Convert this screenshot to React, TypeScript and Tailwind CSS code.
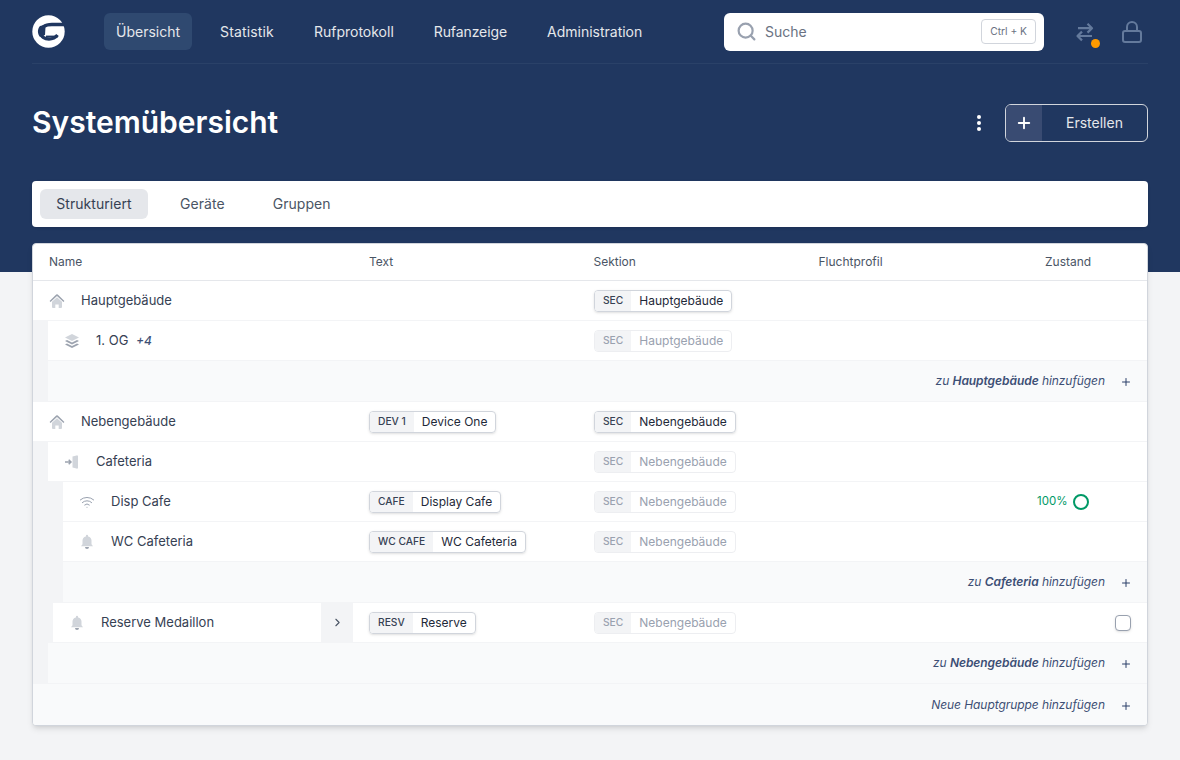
import React from "react";
import { Search, Lock, Plus, ChevronRight, Wifi } from "lucide-react";

const Home = () => (
  <svg width="16" height="16" viewBox="0 0 16 16" className="shrink-0">
    <path d="M7.200 1.600a1.100 1.100 0 0 1 1.600 0l6.600 6.400-.9.900L8 3.100 1.500 8.900.6 8z" fill="#9ca3af" />
    <path d="M8 4.200l5 4.500V14a1 1 0 0 1-1 1h-2.300v-3.500H6.300V15H4a1 1 0 0 1-1-1V8.700z" fill="#d1d5db" />
  </svg>
);
const Layers = () => (
  <svg width="16" height="16" viewBox="0 0 16 16" className="shrink-0">
    <path d="M8 1l7 3.500L8 8 1 4.500z" fill="#d1d5db" />
    <path d="M3 6.900L1 8l7 3.500L15 8l-2-1.100L8 9.400z" fill="#9ca3af" />
    <path d="M3 10.400l-2 1.100L8 15l7-3.500-2-1.100-5 2.500z" fill="#9ca3af" />
  </svg>
);
const Door = () => (
  <svg width="16" height="16" viewBox="0 0 16 16" className="shrink-0">
    <path d="M8.500 2.500l4-1a1 1 0 0 1 1.500 1v11a1 1 0 0 1-1.500 1l-4-1z" fill="#d1d5db" />
    <path d="M1 8h6M4.700 5.700L7 8l-2.300 2.300" fill="none" stroke="#9ca3af" strokeWidth="1.500" />
  </svg>
);
const Bell = () => (
  <svg width="16" height="16" viewBox="0 0 16 16" className="shrink-0">
    <path d="M8 .8a1.100 1.100 0 0 1 1.100 1.100v.5A4.300 4.300 0 0 1 12.500 6.600v3.600L14 12.300H2l1.500-2.100V6.600A4.300 4.300 0 0 1 6.900 2.400v-.5A1.100 1.100 0 0 1 8 .8z" fill="#d1d5db" />
    <path d="M6 13h4a2 2 0 0 1-4 0z" fill="#9ca3af" />
  </svg>
);
const Logo = () => (
  <svg width="33" height="33" viewBox="0 0 33 33" className="shrink-0">
    <circle cx="16.500" cy="16.500" r="16.200" fill="#fff" />
    <path d="M34 9.500H20C12 9.500 8.800 13 8.800 17c0 5 4 7 8.200 7 4 0 6.500-1.500 8.500-4" fill="none" stroke="#203760" strokeWidth="3.400" />
    <path d="M8 11c-3 3.500-2.500 8 0 11l5-2 .5-8 3-3z" fill="#203760" />
    <path d="M14 21.500h12" stroke="#203760" strokeWidth="1.800" />
  </svg>
);
const Transfer = () => (
  <svg width="20" height="20" viewBox="0 0 20 20" fill="none" stroke="#647a9c" strokeWidth="2.200" strokeLinejoin="round">
    <path d="M3 6.200h14M12.500 1.800L17 6.200l-4.500 4.400" />
    <path d="M17 14H2.500M7 9.600L2.500 14 7 18.400" />
  </svg>
);

const Tag = ({ code, label, dim }: { code: string; label: string; dim?: boolean }) => (
  <span className={`inline-flex h-[22px] items-stretch overflow-hidden rounded border ${dim ? "border-gray-200/70 text-gray-400" : "border-gray-300 text-gray-800 shadow-sm"}`}>
    <span className={`flex items-center bg-gray-100 px-2 text-[10.25px] font-medium ${dim ? "text-gray-400" : "text-gray-700"}`}>{code}</span>
    <span className="flex items-center px-2 text-[12px]">{label}</span>
  </span>
);

type RowProps = {
  indent?: number;
  icon: React.ReactNode;
  name: React.ReactNode;
  text?: [string, string];
  sec: string;
  dim?: boolean;
  state?: React.ReactNode;
};

const Row = ({ indent = 0, icon, name, text, sec, dim, state }: RowProps) => (
  <div className="flex h-10 border-b border-gray-100">
    {indent > 0 && <div style={{ width: indent }} className="shrink-0 bg-gray-100" />}
    <div style={{ width: 320 - indent }} className="flex shrink-0 items-center gap-4 pl-4 text-[13px] text-gray-700">
      {icon}
      {name}
    </div>
    <div className="flex w-[225px] shrink-0 items-center pl-4">{text && <Tag code={text[0]} label={text[1]} />}</div>
    <div className="flex w-[225px] shrink-0 items-center pl-4"><Tag code="SEC" label={sec} dim={dim} /></div>
    <div className="w-[225px] shrink-0" />
    <div className="flex flex-1 items-center">{state}</div>
  </div>
);

const AddRow = ({ indent = 0, children, h = "h-[41px]" }: { indent?: number; children: React.ReactNode; h?: string }) => (
  <div className={`flex ${h} border-b border-gray-100`}>
    {indent > 0 && <div style={{ width: indent }} className="shrink-0 bg-gray-100" />}
    <div className="flex flex-1 items-center justify-end bg-gray-50 pr-4 text-[12px] italic tracking-[-0.07px] text-[#3d4f75]">
      <span>{children}</span>
      <Plus size={12} strokeWidth={2} className="ml-[15px] mt-[2px] -mr-[1px] text-[#2a3f68]" />
    </div>
  </div>
);

const navItems = [
  { label: "Übersicht", cls: "bg-[#2f4970]" },
  { label: "Statistik", cls: "tracking-[0.15px]" },
  { label: "Rufprotokoll", cls: "" },
  { label: "Rufanzeige", cls: "tracking-[-0.1px]" },
  { label: "Administration", cls: "" },
];

export default function App() {
  return (
    <div className="min-h-[760px] bg-gray-100 font-['Inter',sans-serif]">
      <div className="h-[272px] bg-[#203760] px-8">
        <div className="flex h-[64px] items-center border-b border-[#2a4168]">
          <Logo />
          <nav className="ml-[39px] flex gap-4">
            {navItems.map((n) => (
              <a key={n.label} className={`flex h-[37px] items-center rounded-md px-3 text-sm text-gray-200 ${n.cls}`}>{n.label}</a>
            ))}
          </nav>
          <div className="ml-auto flex h-[38px] w-80 items-center rounded-md bg-white pl-3 pr-2">
            <Search size={21} strokeWidth={2.5} className="text-gray-400" />
            <span className="ml-2 text-sm text-gray-500">Suche</span>
            <span className="ml-auto flex h-[25px] items-center rounded border border-gray-300 px-2 text-[10.25px] text-gray-500">Ctrl + K</span>
          </div>
          <div className="relative ml-[31px]">
            <Transfer />
            <span className="absolute -bottom-[6px] -right-[5px] h-[9px] w-[9px] rounded-full bg-amber-500" />
          </div>
          <Lock size={24} strokeWidth={2} className="ml-[25px] mr-1 text-[#647a9c]" />
        </div>
        <div className="flex h-[117px] items-center">
          <h1 className="text-[30px] font-semibold text-white">Systemübersicht</h1>
          <div className="ml-auto flex flex-col gap-[2px]">
            <span className="h-1 w-1 rounded-full bg-white" />
            <span className="h-1 w-1 rounded-full bg-white" />
            <span className="h-1 w-1 rounded-full bg-white" />
          </div>
          <button className="ml-6 flex h-[38px] w-[143px] overflow-hidden rounded-md border border-gray-300 text-sm text-gray-200">
            <span className="flex h-full w-9 items-center justify-center bg-[#394b72] text-white"><Plus size={18} strokeWidth={2.5} /></span>
            <span className="flex flex-1 items-center justify-center">Erstellen</span>
          </button>
        </div>
      </div>
      <div className="-mt-[91px] px-8">
        <div className="flex h-[46px] items-center gap-4 rounded bg-white px-2 text-sm tracking-[0.05px] text-gray-600 shadow-sm">
          <span className="flex h-[30px] w-[108px] items-center justify-center rounded-md bg-gray-200 text-gray-700">Strukturiert</span>
          <span className="px-4">Geräte</span>
          <span className="px-4">Gruppen</span>
        </div>
        <div className="mt-4 overflow-hidden rounded border border-gray-300 bg-white shadow-md">
          <div className="flex h-[37px] items-center border-b border-gray-200 text-[12px] text-gray-600">
            <div className="w-[320px] pl-4">Name</div>
            <div className="w-[224.5px] pl-4">Text</div>
            <div className="w-[225px] pl-4">Sektion</div>
            <div className="w-[226.500px] pl-4">Fluchtprofil</div>
            <div className="pl-4">Zustand</div>
          </div>
          <Row icon={<Home />} name="Hauptgebäude" sec="Hauptgebäude" />
          <Row indent={15} icon={<Layers />} name={<span>1. OG <em className="ml-1 text-[12px] font-medium text-[#3d4f75]">+4</em></span>} sec="Hauptgebäude" dim />
          <AddRow indent={15}>zu <b className="font-semibold">Hauptgebäude</b> hinzufügen</AddRow>
          <Row icon={<Home />} name="Nebengebäude" text={["DEV 1", "Device One"]} sec="Nebengebäude" />
          <Row indent={15} icon={<Door />} name="Cafeteria" sec="Nebengebäude" dim />
          <Row indent={30} icon={<Wifi size={16} strokeWidth={1.5} className="shrink-0 text-gray-400" />} name="Disp Cafe" text={["CAFE", "Display Cafe"]} sec="Nebengebäude" dim
            state={<span className="flex items-center gap-[6px] pl-[9px] text-[11.5px] text-emerald-600">100%<span className="h-4 w-4 rounded-full border-2 border-emerald-600" /></span>} />
          <Row indent={30} icon={<Bell />} name="WC Cafeteria" text={["WC CAFE", "WC Cafeteria"]} sec="Nebengebäude" dim />
          <AddRow indent={30}>zu <b className="font-semibold">Cafeteria</b> hinzufügen</AddRow>
          <div className="flex h-10 border-b border-gray-100">
            <div className="w-5 shrink-0 bg-gray-100" />
            <div className="flex w-[268px] shrink-0 items-center gap-4 pl-4 text-[13px] text-gray-700"><Bell />Reserve Medaillon</div>
            <div className="flex w-8 shrink-0 items-center justify-center bg-gray-100"><ChevronRight size={13} className="text-gray-600" /></div>
            <div className="flex w-[225px] shrink-0 items-center pl-4"><Tag code="RESV" label="Reserve" /></div>
            <div className="flex w-[225px] shrink-0 items-center pl-4"><Tag code="SEC" label="Nebengebäude" dim /></div>
            <div className="flex flex-1 items-center justify-end pr-4"><span className="h-4 w-4 rounded border border-gray-400 bg-white shadow-sm" /></div>
          </div>
          <AddRow indent={15}>zu <b className="font-semibold">Nebengebäude</b> hinzufügen</AddRow>
          <AddRow h="h-[41px] border-b-0">Neue Hauptgruppe hinzufügen</AddRow>
        </div>
      </div>
    </div>
  );
}
